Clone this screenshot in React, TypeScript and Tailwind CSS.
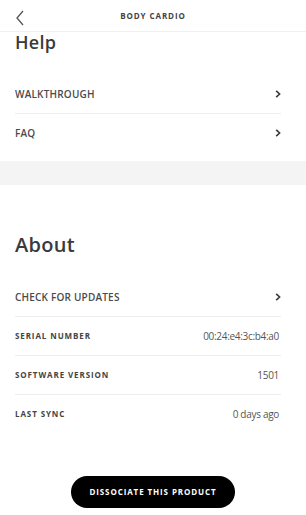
import React from "react";

const font = { fontFamily: '"Open Sans", "Noto Sans", sans-serif' };

function Chevron() {
  return (
    <svg width="6" height="8" viewBox="0 0 6 8" className="shrink-0">
      <path d="M1.2 0.8 L4.6 4 L1.2 7.2" fill="none" stroke="#3a3a3a" strokeWidth="1.6" />
    </svg>
  );
}

function NavRow({ label, divider = true }: { label: string; divider?: boolean }) {
  return (
    <div className="mx-[15px]">
      <div className="h-[38px] flex items-center justify-between pr-[10px]">
        <span className="text-[10px] font-semibold text-[#4a4a4a] tracking-[0.2px]">{label}</span>
        <Chevron />
      </div>
      {divider && <div className="h-px bg-[#ededed] mr-[10px]" />}
    </div>
  );
}

function InfoRow({ label, value, divider = true }: { label: string; value: string; divider?: boolean }) {
  return (
    <div className="mx-[15px]">
      <div className="h-[38px] flex items-center justify-between pr-[12px]">
        <span className="text-[8px] font-bold text-[#444] tracking-[0.9px]">{label}</span>
        <span className="text-[10px] text-[#555] tracking-[-0.3px]">{value}</span>
      </div>
      {divider && <div className="h-px bg-[#ededed] mr-[10px]" />}
    </div>
  );
}

export default function App() {
  return (
    <div className="w-[306px] h-[515px] bg-white overflow-hidden" style={font}>
      <div className="relative h-[32px] flex items-center justify-center border-b border-[#f0f0f0]">
        <svg width="10" height="16" viewBox="0 0 10 16" className="absolute left-[15px] top-[10px]">
          <path d="M8 1 L2 8 L8 15" fill="none" stroke="#555" strokeWidth="1.3" />
        </svg>
        <span className="text-[8px] font-bold tracking-[0.9px] text-[#444]">BODY CARDIO</span>
      </div>
      <div className="px-[15px] h-[22px] -mt-[1px] text-[18px] leading-[22px] font-semibold text-[#3a3a3a] tracking-[0.3px]">
        Help
      </div>
      <div className="h-[22px]" />
      <NavRow label="WALKTHROUGH" />
      <NavRow label="FAQ" divider={false} />
      <div className="h-[9px]" />
      <div className="h-[24px] bg-[#f4f4f4]" />
      <div className="h-[48px]" />
      <div className="px-[15px] h-[24px] text-[20px] leading-[24px] font-semibold text-[#3a3a3a] tracking-[0.3px]">
        About
      </div>
      <div className="h-[21px]" />
      <NavRow label="CHECK FOR UPDATES" />
      <InfoRow label="SERIAL NUMBER" value="00:24:e4:3c:b4:a0" />
      <InfoRow label="SOFTWARE VERSION" value="1501" />
      <InfoRow label="LAST SYNC" value="0 days ago" divider={false} />
      <div className="flex justify-center mt-[43px]">
        <button className="w-[164px] h-[32px] rounded-full bg-black text-white text-[8px] font-bold tracking-[0.9px]">
          DISSOCIATE THIS PRODUCT
        </button>
      </div>
    </div>
  );
}
